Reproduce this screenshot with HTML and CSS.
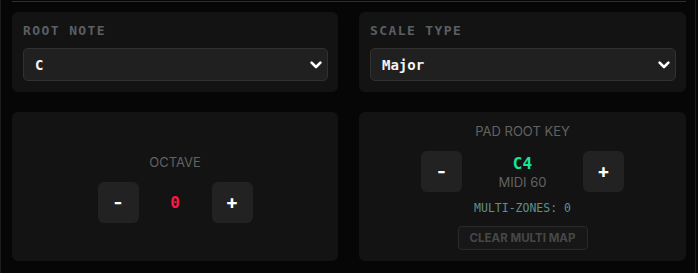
FILE: index.html
```html
<!DOCTYPE html>
<html>
<head>
<meta charset="utf-8">
<link rel="stylesheet" href="styles.css">
</head>
<body>
<div class="frame">
  <div class="content">
    <div class="topline"></div>
    <div class="grid">
      <div class="card card-select">
        <div class="field-label">ROOT NOTE</div>
        <div class="select">
          <span class="select-value">C</span>
          <svg class="chev" width="12" height="8" viewBox="0 0 12 8"><path d="M1.6 1.6 L6 6 L10.4 1.6" fill="none" stroke="#fff" stroke-width="2.6" stroke-linecap="round" stroke-linejoin="round"/></svg>
        </div>
      </div>
      <div class="card card-select">
        <div class="field-label">SCALE TYPE</div>
        <div class="select">
          <span class="select-value">Major</span>
          <svg class="chev" width="12" height="8" viewBox="0 0 12 8"><path d="M1.6 1.6 L6 6 L10.4 1.6" fill="none" stroke="#fff" stroke-width="2.6" stroke-linecap="round" stroke-linejoin="round"/></svg>
        </div>
      </div>
      <div class="card card-control">
        <div class="ctl-label octave-label">OCTAVE</div>
        <div class="stepper">
          <button class="step-btn">-</button>
          <div class="octave-value">0</div>
          <button class="step-btn">+</button>
        </div>
      </div>
      <div class="card card-control">
        <div class="ctl-label">PAD ROOT KEY</div>
        <div class="stepper">
          <button class="step-btn">-</button>
          <div class="key-col">
            <div class="key-name">C4</div>
            <div class="key-midi">MIDI 60</div>
          </div>
          <button class="step-btn">+</button>
        </div>
        <div class="zones">MULTI-ZONES: 0</div>
        <button class="clear-btn">CLEAR MULTI MAP</button>
      </div>
    </div>
  </div>
</div>
</body>
</html>
```

FILE: styles.css
```css
html, body {
  margin: 0;
  padding: 0;
  background: #060606;
  width: 698px;
  height: 273px;
  overflow: hidden;
}

.frame {
  display: flex;
  width: 696px;
  height: 273px;
  border-left: 1px solid #1d1d1d;
  box-sizing: border-box;
}

.content {
  flex: 1;
  padding: 0 9px 0 11px;
  border-right: 1px solid #1d1d1d;
}

.topline {
  margin-top: 1px;
  height: 1px;
  background: #2e2e2e;
}

.grid {
  margin-top: 10px;
  display: grid;
  grid-template-columns: 326px 327px;
  column-gap: 21px;
  row-gap: 20px;
}

.card {
  background: #131313;
  border-radius: 6px;
  box-sizing: border-box;
}

.card-select {
  height: 80px;
  padding: 11px 10px 11px 11px;
}

.field-label {
  font-family: "DejaVu Sans Mono", monospace;
  font-size: 13px;
  font-weight: bold;
  letter-spacing: 1.4px;
  color: #5a5f64;
  line-height: 15px;
  height: 15px;
}

.select {
  margin-top: 10px;
  height: 33px;
  box-sizing: border-box;
  background: #202020;
  border: 1px solid #313131;
  border-radius: 5px;
  display: flex;
  align-items: center;
  justify-content: space-between;
  padding: 0 5px 0 11px;
}

.select-value {
  font-family: "DejaVu Sans Mono", monospace;
  font-size: 14px;
  font-weight: bold;
  color: #f4f4f4;
}

.chev {
  display: block;
}

.card-control {
  height: 149px;
  display: flex;
  flex-direction: column;
  align-items: center;
  justify-content: center;
}

.ctl-label {
  font-family: Inter, "Noto Sans", sans-serif;
  font-size: 13px;
  color: #626262;
  line-height: 16px;
  margin-bottom: 12px;
}

.octave-label {
  margin-top: 4px;
}

.stepper {
  display: flex;
  align-items: center;
  gap: 16px;
}

.step-btn {
  width: 41px;
  height: 41px;
  border: none;
  border-radius: 6px;
  background: #222222;
  color: #ffffff;
  font-family: Inter, "Noto Sans", sans-serif;
  font-size: 19px;
  font-weight: bold;
  padding: 0;
  line-height: 1;
}

.octave-value {
  width: 41px;
  text-align: center;
  font-family: "DejaVu Sans Mono", monospace;
  font-size: 16px;
  font-weight: bold;
  color: #ff1744;
}

.key-col {
  width: 89px;
  display: flex;
  flex-direction: column;
  align-items: center;
}

.key-name {
  font-family: "DejaVu Sans Mono", monospace;
  font-size: 16px;
  font-weight: bold;
  color: #19e69a;
  line-height: 20px;
}

.key-midi {
  font-family: Inter, "Noto Sans", sans-serif;
  font-size: 13px;
  color: #626262;
  line-height: 16px;
}

.zones {
  margin-top: 9px;
  font-family: "DejaVu Sans Mono", monospace;
  font-size: 11.5px;
  color: #5f8f8c;
  line-height: 14px;
}

.clear-btn {
  margin-top: 11px;
  width: 130px;
  height: 24px;
  box-sizing: border-box;
  background: #171717;
  border: 1px solid #2a2a2a;
  border-radius: 4px;
  color: #474747;
  font-family: Inter, "Noto Sans", sans-serif;
  font-size: 11.5px;
  font-weight: bold;
  padding: 0;
}
```
